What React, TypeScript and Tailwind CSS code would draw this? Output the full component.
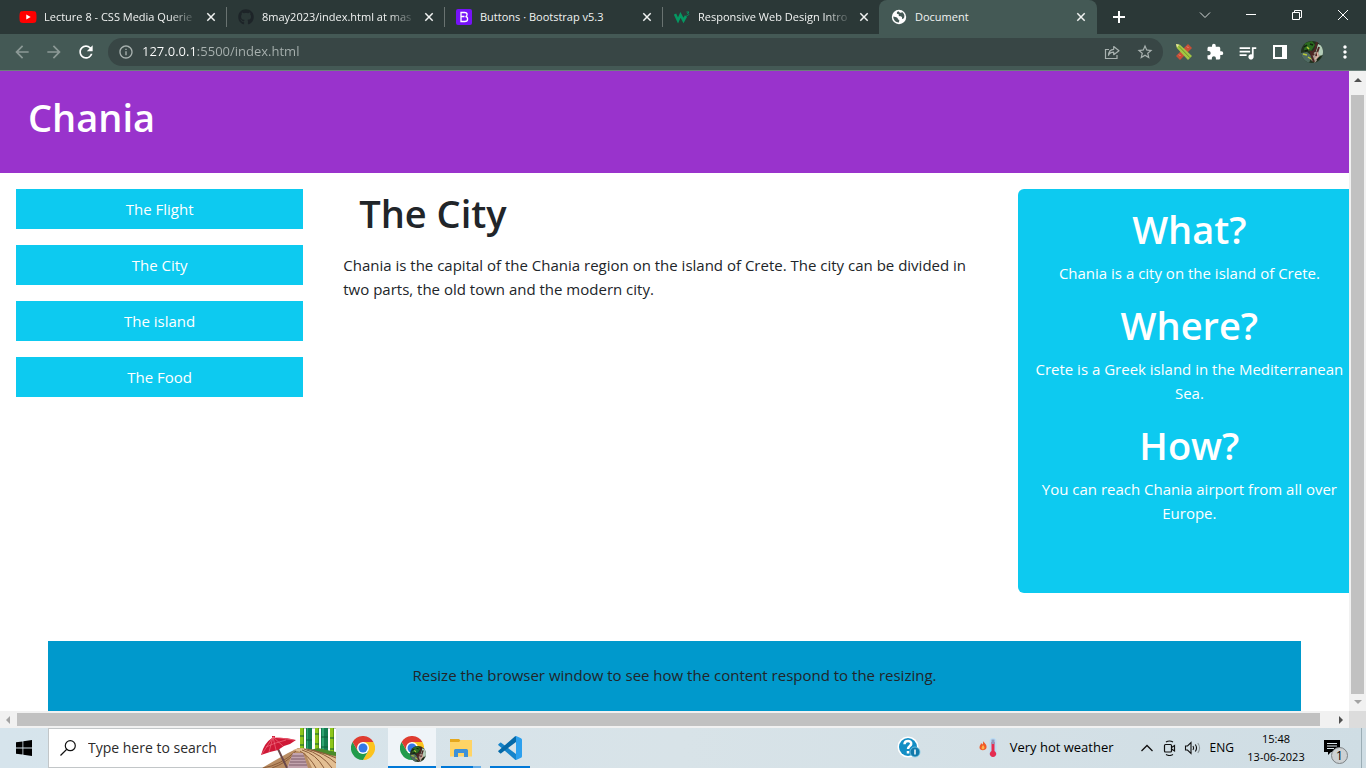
import type { ReactNode } from "react";
import { FaGithub, FaYoutube } from "react-icons/fa";
import {
  MdArrowBack,
  MdArrowForward,
  MdExtension,
  MdInfoOutline,
  MdMoreVert,
  MdQueueMusic,
  MdRefresh,
  MdStarBorder,
} from "react-icons/md";

function BootstrapIcon() {
  return (
    <svg viewBox="0 0 16 16" className="size-4">
      <rect width="16" height="16" rx="2" fill="#7612f8" />
      <path
        d="M5 3.500h3.600c1.600 0 2.500.8 2.500 2.100 0 1-.7 1.800-1.600 2 1.200.1 2.100 1 2.100 2.300 0 1.600-1.200 2.600-3 2.600H5zM5.500 7.500h3M5 3.500v9"
        fill="none"
        stroke="#fff"
        strokeWidth="1.300"
      />
    </svg>
  );
}

function W3Icon() {
  return (
    <svg viewBox="0 0 16 16" className="size-4" fill="none" stroke="#059862">
      <path d="M1 5l3 6.500L6.500 6l3 5.500L12 7" strokeWidth="2.600" />
      <path d="M12.500 3H15l-1.500 1.500c2 0 1.500 2.500-1 1.800" strokeWidth="1" />
    </svg>
  );
}

function GlobeIcon() {
  return (
    <svg viewBox="0 0 16 16" className="size-4">
      <circle cx="8" cy="8" r="7.200" fill="#fff" />
      <path
        d="M7.500 2.300c-1 .3-2 1.200-1.600 2.100.3.700 1.300.2 1.700.8.400.7-.2 1.400.5 1.900.8.600 2 .1 2.700.8.600.7-.1 1.500.5 2 .6.400 1.500-.5 1.900-1.400.8-2.600-.6-4.600-2.200-5.600-.4.900-1.300 1.200-2 .8-.6-.3-.9-.9-1.500-1.400zM2.300 7.600c1.300.4 2.900.4 3.900 1.100.9.600.5 1.500 1.100 1.900.5.300 1 .3 1 .9l-.4 2.100C4.600 13.500 2.200 11 2.300 7.600z"
        fill="#445955"
      />
    </svg>
  );
}

function CloseIcon() {
  return (
    <svg viewBox="0 0 10 10" className="size-[10px]" stroke="#f1f3f2" strokeWidth="1.500">
      <path d="M1.300 1.300l7.400 7.400M8.700 1.300L1.300 8.700" />
    </svg>
  );
}

function ShareIcon() {
  return (
    <svg viewBox="0 0 16 16" className="size-4" fill="none" stroke="#a9b2b0" strokeWidth="1.200">
      <path d="M5 5.500H1.500v9h11.500V11" />
      <path d="M4.500 11.300c.2-3.800 2-5.800 5.200-6V2.500L15 6.700l-5.300 4V8.200c-2.400 0-4.200.9-5.200 3.100z" strokeLinejoin="round" />
    </svg>
  );
}

function ToolsIcon() {
  return (
    <svg viewBox="0 0 18 18" className="size-[18px]">
      <path d="M13 1l4 4L5 17l-4-4z" fill="#c94f36" />
      <path d="M12 3.500l1.500 1.500M4 11.500L5.500 13" stroke="#e8937c" />
      <path d="M1 1l4 .8L17 13l-4 4L1.800 5z" fill="#a3c644" />
      <path d="M1 1l3.200.7L2 4.400z" fill="#e8e2a0" />
      <path d="M4 3.500l11 11.300" stroke="#6d9428" />
    </svg>
  );
}

function Avatar({ className }: { className: string }) {
  return (
    <svg viewBox="0 0 22 22" className={className}>
      <clipPath id="avatar-disc">
        <circle cx="11" cy="11" r="11" />
      </clipPath>
      <g clipPath="url(#avatar-disc)">
        <path d="M0 0h22v22H0z" fill="#22331f" />
        <path d="M4 2l7-2 3 4-4 6-7-1z" fill="#2c6b20" />
        <path d="M0 12l6-1 5 4-3 7H0z" fill="#4f6a62" />
        <path d="M17 3l5 2v9l-4 1-3-5z" fill="#b4cdb8" />
        <path d="M12 12l4-2 3 5-5 7-4-3z" fill="#a89a90" />
        <path d="M16 1l-2 8-4 4 3 8M9 10l4 4M18 6l-3 9" stroke="#4d2624" strokeWidth="2" fill="none" />
        <path d="M6 6l2 2M2 13l4 1M7 16l3 2" stroke="#b9c83a" strokeWidth="1.500" />
        <path d="M16 11l1 4-3 3" stroke="#e1b4a3" strokeWidth="1.200" fill="none" />
        <path d="M3 6l3-2M9 3l3 1M4 10l3-1M19 16l-3 3" stroke="#12200f" strokeWidth="1.500" />
      </g>
    </svg>
  );
}

function ChromeIcon() {
  return (
    <svg viewBox="0 0 48 48" className="size-6">
      <path d="M24 12h20.800A24 24 0 0 1 24 48l10.400-18z" fill="#fcc31e" />
      <path d="M13.600 30L3.200 12A24 24 0 0 0 24 48l10.400-18z" fill="#229b4b" />
      <path d="M3.200 12A24 24 0 0 1 44.800 12H24l-10.400 18z" fill="#df3c30" />
      <circle cx="24" cy="24" r="12" fill="#fff" />
      <circle cx="24" cy="24" r="9" fill="#3478e6" />
    </svg>
  );
}

function FolderIcon() {
  return (
    <svg viewBox="0 0 22 20" className="h-5 w-[22px]">
      <path d="M0 1h9l2 2h11v15H0z" fill="#e5a81c" />
      <path d="M0 4h9l2-2h11v16.500H0z" fill="#ffd465" />
      <path d="M4 19v-6.500q0-1.500 1.500-1.500h11q1.500 0 1.500 1.500V19h-4v-4H8v4z" fill="#3d91d8" />
    </svg>
  );
}

function CodeIcon() {
  return (
    <svg viewBox="0 0 24 24" className="size-6">
      <path d="M.4 8.300l1.700-1.500q.5-.4 1.100 0L18 18v6q-.7 0-1.200-.5L.4 9.300q-.5-.5 0-1z" fill="#1684ca" />
      <path d="M.4 15.700l1.700 1.500q.5.400 1.100 0L18 6V0q-.7 0-1.200.5L.4 14.700q-.5.500 0 1z" fill="#0569a8" />
      <path d="M17 .5q.7-.7 1.700-.3L23 2.200q1 .5 1 1.500v16.600q0 1-1 1.500l-4.300 2q-1 .4-1.700-.3 1 .4 1-.9V1.400Q18 .1 17 .5z" fill="#2ca0ee" />
    </svg>
  );
}

function WindowsIcon() {
  return (
    <svg viewBox="0 0 16 16" className="size-4" fill="#000">
      <path d="M0 2.300l6.500-.9v6.200H0zM7.300 1.300L16 0v7.600H7.300zM0 8.400h6.500v6.200L0 13.700zM7.300 8.400H16V16l-8.700-1.300z" />
    </svg>
  );
}

function SearchIcon() {
  return (
    <svg viewBox="0 0 16 16" className="size-4" fill="none" stroke="#111" strokeWidth="1.200">
      <circle cx="10.300" cy="5.700" r="5" />
      <path d="M6.800 9.300L.5 15.500" />
    </svg>
  );
}

function BambooScene() {
  return (
    <svg viewBox="0 0 76 40" className="h-10 w-[76px] shrink-0">
      <path d="M40 0h4v24h-4zM55 0h4v26h-4zM70 0h4v32h-4z" fill="#8dc51a" />
      <path d="M43 0h1v24h-1zM58 0h1v26h-1zM73 0h1v32h-1z" fill="#5f9a12" />
      <path d="M46 0h6v26h-6zM61 0h7v30h-7z" fill="#147d50" />
      <path d="M47 0h1v26h-1zM62 0h2v30h-2z" fill="#2fa471" />
      <path d="M40 8h4M40 17h4M46 12h6M55 6h4M55 16h4M61 9h7M61 19h7M70 10h4M70 21h4" stroke="#0e5c38" />
      <path d="M46 23l12-3 18 4v8H52z" fill="#4b8a2c" />
      <path d="M2 40l12-7 14-8 10-5 12 1 14 5 12 2v12z" fill="#b98d63" />
      <path d="M33 22q8-3 14-1l17 5 12 3v11H52l-7-15z" fill="#e3bf93" />
      <path d="M42 22q14 4 22 18M44 21q18 5 28 19M47 21q18 4 29 14M52 22q14 3 24 8M40 23q10 6 16 17M3 40q18-3 33-17M12 40q14-5 22-14" stroke="#8a5c3a" fill="none" />
      <path d="M33 25h10l5 15H27z" fill="#c2a3ad" />
      <path d="M32 28h12M31 31h14M30 34h16M29 37h18" stroke="#7d5b68" />
      <path d="M18 21l9 19" stroke="#69484a" strokeWidth="2" />
      <path d="M1 27Q4 15 12 10V8h3v2q9-1 21 2l-6 4-6 2-6 4-8 2-6 2z" fill="#cf1836" />
      <path d="M13 9L2 26M13 9L9 24M13 9l3 13M13 9l10 9M13 9l21 3M6 19q8-4 20-7" stroke="#f4788a" strokeWidth=".6" fill="none" />
    </svg>
  );
}

function HelpIcon() {
  return (
    <svg viewBox="0 0 24 24" className="size-6">
      <circle cx="11" cy="11" r="10.500" fill="#fff" />
      <circle cx="11" cy="11" r="9" fill="#138ec5" />
      <path d="M7.500 8.200c.2-4.300 7.200-4 6.700-.2-.3 2.200-3.200 2.300-3.200 5M11 15v2.500" fill="none" stroke="#fff" strokeWidth="2.500" />
      <circle cx="18" cy="16" r="5" fill="#127aab" stroke="#7cc8e4" strokeWidth=".8" />
      <path d="M18 13.500v5" stroke="#fff" strokeWidth="1.500" />
    </svg>
  );
}

function WeatherIcon() {
  return (
    <svg viewBox="0 0 20 20" className="size-5">
      <path d="M4 3c1 2 4 3 3.500 6.500-.4 3.500-7 3.500-7 0C.5 7 2 7 2 5l1.500 1.500Q4.500 5 4 3z" fill="#f05a28" />
      <path d="M4 7c2 2 2 4 0 4.500-2-.5-2-2 0-4.500z" fill="#ffb34a" />
      <rect x="10.500" y="0" width="7" height="19" rx="3.500" fill="#b9dcf4" />
      <path d="M12.500 4h3v9a3.200 3.200 0 1 1-3 0z" fill="#e52c50" />
      <path d="M12.500 1.500h3V6h-3z" fill="#9199bd" />
    </svg>
  );
}

function MeetIcon() {
  return (
    <svg viewBox="0 0 16 16" className="size-4" fill="none" stroke="#111" strokeWidth="1.200">
      <rect x="2.500" y="4.500" width="7" height="7.500" rx="1" />
      <path d="M9.500 7.500l3-2v5.500l-3-2M4 2q3.500-2 7 0M4 14.500q3.500 2 7 0" />
    </svg>
  );
}

function VolumeIcon() {
  return (
    <svg viewBox="0 0 18 16" className="h-4 w-[18px]" fill="none" stroke="#111" strokeWidth="1.100">
      <path d="M1.500 6h2l3.500-3.500v11L3.500 10h-2zM9 6q1.300 2 0 4M11.300 4.500q2.500 3.500 0 7" />
      <path d="M13.800 3q3.600 5 0 10" stroke="#8f999d" />
    </svg>
  );
}

function NotificationIcon() {
  return (
    <svg viewBox="0 0 16 16" className="size-4">
      <path d="M0 0h16v12H7l-3 3v-3H0z" fill="#000" />
      <path d="M3 3.500h10M3 6h10M3 8.500h7" stroke="#dce7ec" />
    </svg>
  );
}

const tabs: { title: string; icon: ReactNode; active?: boolean; fades?: boolean }[] = [
  {
    title: "Lecture 8 - CSS Media Querie",
    fades: true,
    icon: (
      <span className="relative flex size-4 items-center justify-center">
        <span className="absolute size-[6px] bg-white" />
        <FaYoutube className="relative size-[18px] shrink-0 text-[#ff0000]" />
      </span>
    ),
  },
  { title: "8may2023/index.html at mas", fades: true, icon: <FaGithub className="size-4 text-[#1d2428]" /> },
  { title: "Buttons · Bootstrap v5.3", icon: <BootstrapIcon /> },
  { title: "Responsive Web Design Intro", fades: true, icon: <W3Icon /> },
  { title: "Document", icon: <GlobeIcon />, active: true },
];

function TabStrip() {
  return (
    <div className="flex h-[34px] shrink-0 bg-[#2b3837] pl-[9px] text-[#f1f3f2]">
      {tabs.map((tab, i) => (
        <div
          key={tab.title}
          className={
            tab.active
              ? "flex w-[218px] min-w-0 items-center rounded-t-lg bg-[#445955] pr-[11px] pl-3"
              : i === 3
                ? "flex w-[216px] min-w-0 items-center pr-[10px] pl-[11px]"
                : "flex w-[218px] min-w-0 items-center bg-[linear-gradient(#697371,#697371)] bg-[length:1px_20px] bg-[position:right_center] bg-no-repeat pr-[11px] pl-[11px]"
          }
        >
          <button className="flex min-w-0 flex-1 items-center gap-2 text-left">
            <span className="shrink-0">{tab.icon}</span>
            <span
              className={
                tab.fades
                  ? "text-[11px] leading-4 whitespace-nowrap [mask-image:linear-gradient(to_right,black_85%,#00000030)]"
                  : "text-[11px] leading-4 whitespace-nowrap"
              }
            >
              {tab.title}
            </span>
          </button>
          <button aria-label={`Close ${tab.title}`} className="shrink-0">
            <CloseIcon />
          </button>
        </div>
      ))}
      <button aria-label="New tab" className="flex w-11 items-center justify-center">
        <svg viewBox="0 0 12 12" className="size-3" stroke="#fff" strokeWidth="2">
          <path d="M6 0v12M0 6h12" />
        </svg>
      </button>
      <div className="ml-auto flex h-[29px]">
        <button aria-label="Search tabs" className="flex w-[46px] items-center justify-center">
          <svg viewBox="0 0 12 12" className="size-3" fill="none" stroke="#d5d9d8">
            <path d="M1 3.500l5 5 5-5" />
          </svg>
        </button>
        <button aria-label="Minimize" className="flex w-[46px] items-center justify-center">
          <span className="h-px w-[10px] bg-white" />
        </button>
        <button aria-label="Restore" className="flex w-[46px] items-center justify-center">
          <svg viewBox="0 0 10 10" className="size-[10px]" fill="none" stroke="#fff">
            <path d="M.5 2.500h7v7h-7zM2.500 2.500v-2h7v7h-2" />
          </svg>
        </button>
        <button aria-label="Close window" className="flex w-[46px] items-center justify-center">
          <svg viewBox="0 0 10 10" className="size-[10px]" stroke="#fff">
            <path d="M0 0l10 10M10 0L0 10" />
          </svg>
        </button>
      </div>
    </div>
  );
}

function Toolbar() {
  return (
    <div className="flex h-[37px] shrink-0 items-center border-b border-[#6b807b] bg-[#445955] pr-[11px] pl-3 text-white">
      <div className="flex gap-3">
        <button aria-label="Back" className="text-[#8c9996]"><MdArrowBack className="size-5" /></button>
        <button aria-label="Forward" className="text-[#8c9996]"><MdArrowForward className="size-5" /></button>
        <button aria-label="Reload"><MdRefresh className="size-5" /></button>
      </div>
      <div className="ml-3 flex h-7 flex-1 items-center rounded-full bg-[#384645] pr-[9px] pl-[10px] text-[#a9b2b0]">
        <MdInfoOutline className="size-4" />
        <input
          aria-label="Address"
          defaultValue="127.0.0.1:5500/index.html"
          className="ml-2 min-w-0 flex-1 bg-[linear-gradient(to_right,#ffffff_56px,#a9b2b0_56px)] bg-clip-text text-[13px] text-transparent outline-none"
        />
        <button aria-label="Share"><ShareIcon /></button>
        <button aria-label="Bookmark" className="ml-4"><MdStarBorder className="size-[18px]" /></button>
      </div>
      <div className="ml-3 flex items-center gap-[13px]">
        <button aria-label="Web tools"><ToolsIcon /></button>
        <button aria-label="Extensions"><MdExtension className="size-[18px]" /></button>
        <button aria-label="Media"><MdQueueMusic className="size-[21px]" /></button>
        <button aria-label="Side panel">
          <svg viewBox="0 0 18 18" className="size-[18px]">
            <path d="M2 2h14v14H2zM4 4v10h7V4z" fill="#fff" fillRule="evenodd" />
          </svg>
        </button>
      </div>
      <button aria-label="Profile" className="ml-3"><Avatar className="size-[22px]" /></button>
      <button aria-label="Menu" className="ml-3"><MdMoreVert className="size-5" /></button>
    </div>
  );
}

const menu = ["The Flight", "The City", "The island", "The Food"];

const facts = [
  { title: "What?", text: "Chania is a city on the island of Crete." },
  { title: "Where?", text: "Crete is a Greek island in the Mediterranean Sea." },
  { title: "How?", text: "You can reach Chania airport from all over Europe." },
];

function Page() {
  return (
    <div className="min-w-0 flex-1 overflow-hidden bg-white text-[15px] leading-6 text-[#212529]">
      <header className="bg-[#9933cc] px-7 pt-[22px] pb-8 text-white">
        <h1 className="text-[38px] leading-[48px] font-semibold">Chania</h1>
      </header>
      <div className="grid grid-cols-[1fr_2fr_1fr] pt-4">
        <ul className="flex flex-col gap-4 pr-[34px] pl-4 text-center text-white">
          {menu.map((item) => (
            <li key={item} className="bg-[#0dcaf0] p-2">{item}</li>
          ))}
        </ul>
        <main className="pr-6 pl-[6px]">
          <h1 className="mb-4 pl-4 text-[38px] leading-[48px] font-semibold">The City</h1>
          <p>
            Chania is the capital of the Chania region on the island of Crete. The city can be divided in two parts,
            the old town and the modern city.
          </p>
        </main>
        <aside className="-mr-3 ml-[6px] h-[404px] rounded-md bg-[#0dcaf0] px-4 pt-4 text-center text-white">
          {facts.map((fact) => (
            <section key={fact.title} className="mb-4">
              <h2 className="mb-2 text-[38px] leading-[48px] font-semibold">{fact.title}</h2>
              <p>{fact.text}</p>
            </section>
          ))}
        </aside>
      </div>
      <footer className="mx-12 mt-12 bg-[#0099cc] px-4 pt-[22px] pb-6 text-center">
        Resize the browser window to see how the content respond to the resizing.
      </footer>
    </div>
  );
}

function Arrow({ path, color }: { path: string; color: string }) {
  return (
    <svg viewBox="0 0 8 8" className="size-2 shrink-0" fill={color}>
      <path d={path} />
    </svg>
  );
}

function Taskbar() {
  return (
    <div className="flex h-10 shrink-0 items-stretch bg-[linear-gradient(to_right,#d6e4ec,#d8e3e8_50%,#cfdde4)] text-black">
      <button aria-label="Start" className="flex w-12 items-center justify-center"><WindowsIcon /></button>
      <div className="flex w-72 items-center border border-r-0 border-[#c2c6c8] bg-white pl-[11px]">
        <SearchIcon />
        <input
          aria-label="Search"
          placeholder="Type here to search"
          className="ml-3 min-w-0 flex-1 text-sm outline-none placeholder:text-[#2b2b2b]"
        />
        <BambooScene />
      </div>
      <button aria-label="Chrome" className="ml-[3px] flex w-12 items-center justify-center"><ChromeIcon /></button>
      <button aria-label="Chrome profile" className="relative ml-px flex w-12 items-center justify-center border-b-2 border-[#0078d7] bg-[#eff4f8] pt-[2px]">
        <ChromeIcon />
        <Avatar className="absolute right-[10px] bottom-1 size-4" />
      </button>
      <button aria-label="File Explorer" className="ml-[5px] flex w-10 items-center justify-center bg-[linear-gradient(to_right,#0078d7_32px,#66aee8_32px)] bg-[length:100%_2px] bg-bottom bg-no-repeat"><FolderIcon /></button>
      <button aria-label="Code editor" className="ml-[9px] flex w-10 items-center justify-center border-b-2 border-[#0078d7] pt-[2px]"><CodeIcon /></button>
      <div className="ml-auto flex items-center">
        <button aria-label="Help" className="mr-[58px]"><HelpIcon /></button>
        <button className="mr-[26px] flex items-center gap-[11px] text-[13px]"><WeatherIcon />Very hot weather</button>
        <button aria-label="Show hidden icons" className="mr-2">
          <svg viewBox="0 0 14 14" className="size-[14px]" fill="none" stroke="#111" strokeWidth="1.300">
            <path d="M1.500 10L7 4.500l5.500 5.500" />
          </svg>
        </button>
        <button aria-label="Meet now" className="mr-[6px]"><MeetIcon /></button>
        <button aria-label="Volume" className="mr-2"><VolumeIcon /></button>
        <button className="mr-3 text-xs">ENG</button>
        <button className="mr-[18px] w-[60px] text-center text-[11px] leading-[18px] whitespace-nowrap">15:48<br />13-06-2023</button>
        <button aria-label="Notifications" className="relative mr-[21px]">
          <NotificationIcon />
          <span className="absolute top-[7px] left-[7px] flex size-[17px] items-center justify-center rounded-full border border-[#7d8285] bg-[#cdd1d3] text-xs text-black">1</span>
        </button>
      </div>
      <div className="w-[5px] border-l border-[#9badb5]" />
    </div>
  );
}

export default function App() {
  return (
    <div className="flex h-screen flex-col overflow-hidden font-['Open_Sans','Noto_Sans',sans-serif]">
      <TabStrip />
      <Toolbar />
      <div className="flex min-h-0 flex-1">
        <Page />
        <div className="flex w-[17px] shrink-0 flex-col items-center bg-[#f1f1f1] py-[5px]">
          <Arrow path="M0 6l4-4 4 4z" color="#505050" />
          <div className="mt-[11px] mb-1 w-[13px] flex-1 bg-[#c1c1c1]" />
          <Arrow path="M0 2l4 4 4-4z" color="#a3a3a3" />
        </div>
      </div>
      <div className="flex h-[17px] shrink-0">
        <div className="flex flex-1 items-center bg-[#f1f1f1] px-1">
          <Arrow path="M6 0L2 4l4 4z" color="#a3a3a3" />
          <div className="mr-[17px] ml-[5px] h-[13px] flex-1 bg-[#c1c1c1]" />
          <Arrow path="M2 0l4 4-4 4z" color="#505050" />
        </div>
        <div className="w-[17px] bg-[#dcdcdc]" />
      </div>
      <Taskbar />
    </div>
  );
}
